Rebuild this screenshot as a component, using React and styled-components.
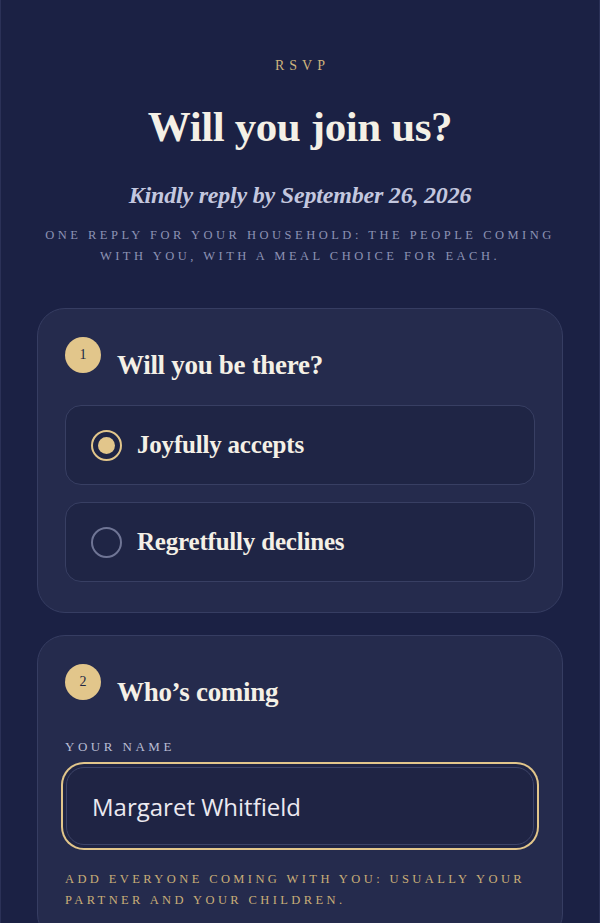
import React from "react";
import styled, { createGlobalStyle } from "styled-components";

const Global = createGlobalStyle`
  html, body { margin: 0; padding: 0; background: #1b2144; }
  * { box-sizing: border-box; }
`;

const Page = styled.div`
  min-height: 923px;
  background: #1b2144;
  border-left: 1px solid #2b3157;
  border-right: 1px solid #2b3157;
  padding: 57px 36px 40px;
  font-family: "Liberation Serif", "DejaVu Serif", serif;
  display: flex;
  flex-direction: column;
  align-items: stretch;
`;

const Eyebrow = styled.div`
  text-align: center;
  color: #cdb47c;
  font-size: 14px;
  letter-spacing: 5px;
  line-height: 18px;
  padding-left: 5px;
`;

const Title = styled.h1`
  margin: 27px 0 0;
  text-align: center;
  color: #f4f0e6;
  font-size: 43px;
  font-weight: 700;
  line-height: 50px;
  letter-spacing: -0.4px;
`;

const Deadline = styled.p`
  margin: 29px 0 0;
  text-align: center;
  color: #c3c7df;
  font-style: italic;
  font-weight: 700;
  font-size: 24px;
  line-height: 28px;
  letter-spacing: -0.2px;
`;

const Caps = styled.p`
  margin: ${(p) => p.$mt || 0}px 0 0;
  text-align: ${(p) => p.$align || "left"};
  color: ${(p) => p.$color || "#8d93b4"};
  font-size: ${(p) => p.$size || 12.5}px;
  letter-spacing: ${(p) => p.$ls || 3}px;
  line-height: 21px;
  text-transform: uppercase;
`;

const Card = styled.section`
  margin-top: ${(p) => p.$mt}px;
  background: #252b4d;
  border: 1px solid #363d62;
  border-radius: 28px;
  padding: 28px 27px 30px;
`;

const Header = styled.div`
  display: flex;
  align-items: flex-start;
  gap: 16px;
  margin-bottom: ${(p) => p.$mb}px;
`;

const Badge = styled.div`
  width: 36px;
  height: 36px;
  border-radius: 50%;
  background: #e2c68b;
  color: #232844;
  display: flex;
  align-items: center;
  justify-content: center;
  font-size: 14px;
  font-weight: 400;
  flex: none;
`;

const Heading = styled.h2`
  margin: 13px 0 0;
  color: #f4f0e6;
  font-size: 27px;
  font-weight: 700;
  line-height: 30px;
  letter-spacing: -0.3px;
`;

const Options = styled.div`
  display: flex;
  flex-direction: column;
  gap: 17px;
`;

const Option = styled.div`
  height: 80px;
  background: #1f2545;
  border: 1px solid #383f63;
  border-radius: 16px;
  display: flex;
  align-items: center;
  gap: 15px;
  padding: 0 25px;
`;

const Radio = styled.span`
  width: 31px;
  height: 31px;
  border-radius: 50%;
  border: 2px solid ${(p) => (p.$on ? "#e2c68b" : "#6f7595")};
  display: flex;
  align-items: center;
  justify-content: center;
  flex: none;
  &::after {
    content: "";
    display: ${(p) => (p.$on ? "block" : "none")};
    width: 17px;
    height: 17px;
    border-radius: 50%;
    background: #e2c68b;
  }
`;

const OptionLabel = styled.span`
  color: #f4f0e6;
  font-size: 25px;
  font-weight: 700;
  letter-spacing: -0.2px;
`;

const Field = styled.div`
  margin: 10px 1px 0;
  height: 78px;
  background: #1f2444;
  border: 1px solid #3d4469;
  border-radius: 18px;
  box-shadow: 0 0 0 3px #1f2444, 0 0 0 5px #e2c68b;
  display: flex;
  align-items: center;
  padding: 0 25px;
  font-family: "Open Sans", "Liberation Sans", sans-serif;
  font-size: 24px;
  color: #ebe9f0;
`;

export default function App() {
  return (
    <>
      <Global />
      <Page>
        <Eyebrow>RSVP</Eyebrow>
        <Title>Will you join us?</Title>
        <Deadline>Kindly reply by September 26, 2026</Deadline>
        <Caps $mt={16} $align="center" $ls={3.5}>
          One reply for your household: the people coming
          <br />
          with you, with a meal choice for each.
        </Caps>

        <Card $mt={41}>
          <Header $mb={25}>
            <Badge>1</Badge>
            <Heading>Will you be there?</Heading>
          </Header>
          <Options>
            <Option>
              <Radio $on />
              <OptionLabel>Joyfully accepts</OptionLabel>
            </Option>
            <Option>
              <Radio />
              <OptionLabel>Regretfully declines</OptionLabel>
            </Option>
          </Options>
        </Card>

        <Card $mt={22}>
          <Header $mb={29}>
            <Badge>2</Badge>
            <Heading>Who’s coming</Heading>
          </Header>
          <Caps $color="#b9bdd4" $ls={3.5} $size={13}>Your name</Caps>
          <Field>Margaret Whitfield</Field>
          <Caps $mt={24} $color="#c9ae78" $ls={3.4}>
            Add everyone coming with you: usually your
            <br />
            partner and your children.
          </Caps>
        </Card>
      </Page>
    </>
  );
}
